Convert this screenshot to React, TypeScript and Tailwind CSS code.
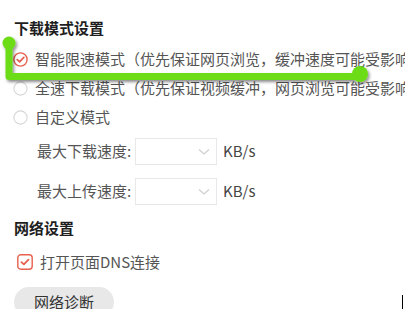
import React from 'react';

const font = { fontFamily: '"Microsoft YaHei", "Noto Sans CJK SC", "Noto Sans", sans-serif' };

const Radio: React.FC<{ checked?: boolean }> = ({ checked }) =>
  checked ? (
    <svg width="15" height="15" viewBox="0 0 15 15" className="shrink-0">
      <circle cx="7.5" cy="7.5" r="6.6" fill="white" stroke="#e8604f" strokeWidth="1.4" />
      <path d="M4.3 7.6 L6.6 9.8 L10.8 5.4" fill="none" stroke="#e8604f" strokeWidth="1.8" strokeLinecap="round" strokeLinejoin="round" />
    </svg>
  ) : (
    <svg width="15" height="15" viewBox="0 0 15 15" className="shrink-0">
      <circle cx="7.5" cy="7.5" r="6.6" fill="white" stroke="#d6d6d6" strokeWidth="1.1" />
    </svg>
  );

const SpeedRow: React.FC<{ label: string }> = ({ label }) => (
  <div className="flex items-center h-[27px] pl-[23px]">
    <span className="w-[98px] text-[15px] text-[#555]">{label}</span>
    <div className="w-[82px] h-[27px] border border-[#e8e8e8] flex items-center justify-end pr-[6px]">
      <svg width="12" height="8" viewBox="0 0 12 8">
        <path d="M1 1.5 L6 6 L11 1.5" fill="none" stroke="#d0d0d0" strokeWidth="1.3" />
      </svg>
    </div>
    <span className="ml-[6px] text-[15px] text-[#444]">KB/s</span>
  </div>
);

const App: React.FC = () => {
  return (
    <div className="relative w-[405px] h-[309px] overflow-hidden bg-white pl-[14px] pt-[19px]" style={font}>
      <h3 className="text-[15px] font-bold text-[#1e1e1e] leading-[18px]">下载模式设置</h3>

      <div className="mt-[8px] flex flex-col whitespace-nowrap">
        <label className="flex items-center gap-[7px] h-[29px] -ml-[1px] text-[15px] text-[#555]">
          <Radio checked />
          <span>智能限速模式（优先保证网页浏览，缓冲速度可能受影响）</span>
        </label>
        <label className="flex items-center gap-[7px] h-[29px] -ml-[1px] text-[15px] text-[#555]">
          <Radio />
          <span>全速下载模式（优先保证视频缓冲，网页浏览可能受影响）</span>
        </label>
        <label className="flex items-center gap-[7px] h-[29px] -ml-[1px] text-[15px] text-[#555]">
          <Radio />
          <span>自定义模式</span>
        </label>
      </div>

      <div className="mt-[6px] flex flex-col gap-[13px]">
        <SpeedRow label="最大下载速度:" />
        <SpeedRow label="最大上传速度:" />
      </div>

      <h3 className="mt-[14px] text-[15px] font-bold text-[#1e1e1e] leading-[18px]">网络设置</h3>

      <label className="mt-[15px] flex items-center gap-[7px] h-[20px] pl-[3px] text-[15px] text-[#555]">
        <svg width="16" height="16" viewBox="0 0 16 16" className="shrink-0">
          <rect x="0.8" y="0.8" width="14.4" height="14.4" rx="3" fill="white" stroke="#e8604f" strokeWidth="1.4" />
          <path d="M4.4 8.1 L6.9 10.4 L11.5 5.6" fill="none" stroke="#e8604f" strokeWidth="1.8" strokeLinecap="round" strokeLinejoin="round" />
        </svg>
        <span>打开页面DNS连接</span>
      </label>

      <button className="mt-[15px] w-[100px] h-[30px] rounded-full bg-[#e8e8e8] text-[15px] text-[#333]">
        网络诊断
      </button>

      {/* green annotation over the first option */}
      <svg className="absolute left-0 top-0 pointer-events-none" width="405" height="309">
        <defs>
          <filter id="sh" x="-10%" y="-50%" width="120%" height="200%">
            <feDropShadow dx="1.5" dy="2" stdDeviation="1.5" floodColor="#000" floodOpacity="0.45" />
          </filter>
        </defs>
        <g filter="url(#sh)">
          <path d="M9 43 L9 76.5 L360 76.5" fill="none" stroke="#6cdc14" strokeWidth="7" strokeLinejoin="round" />
          <circle cx="9" cy="43" r="6.5" fill="#6cdc14" />
          <circle cx="360" cy="74" r="8" fill="#6cdc14" />
        </g>
      </svg>

      <div className="absolute left-[402px] top-[295px] w-px h-[14px] bg-black" />
    </div>
  );
};

export default App;
